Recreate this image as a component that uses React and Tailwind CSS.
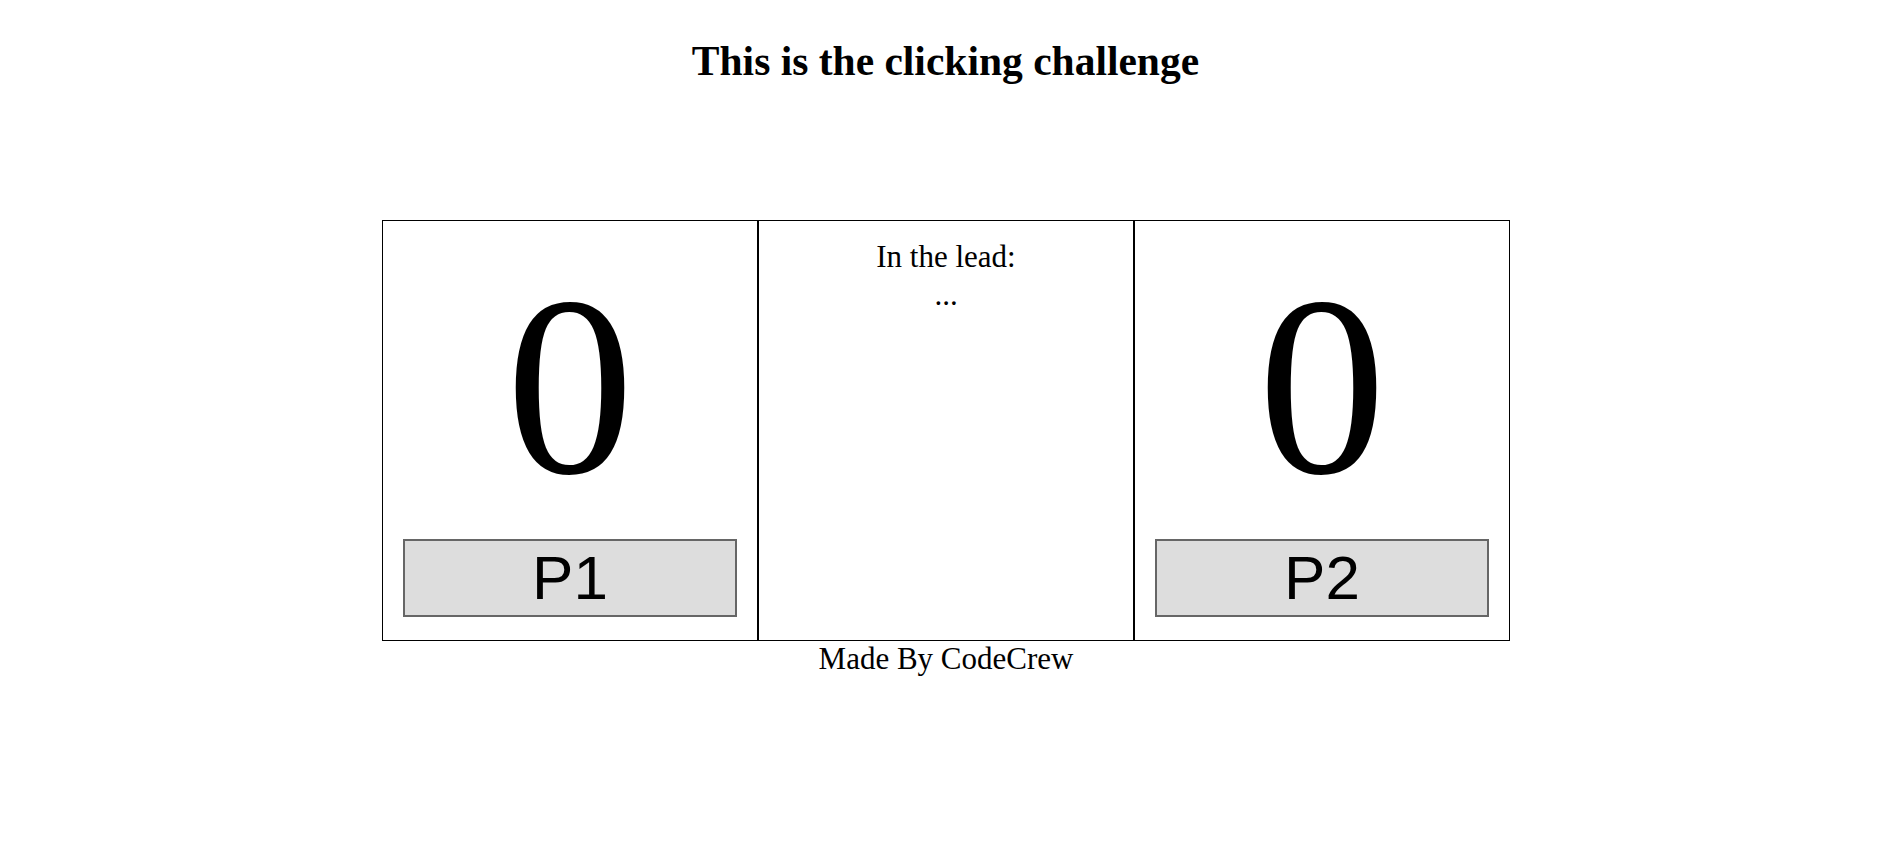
import React, { useState } from "react";

const ScoreCell = ({ score, label, onClick }) => (
  <div className="w-[376px] h-[421px] border border-black flex flex-col items-center pt-[36px]">
    <div className="h-[260px] text-[256px] leading-[260px]">{score}</div>
    <button
      onClick={onClick}
      className="mt-[22px] w-[334px] h-[78px] border-2 border-[#666666] bg-[#dddddd] text-[62px] leading-none text-black flex items-center justify-center font-['Liberation_Sans',Arial,sans-serif]"
    >
      {label}
    </button>
  </div>
);

const App = () => {
  const [p1, setP1] = useState(0);
  const [p2, setP2] = useState(0);

  const leader = p1 === p2 ? "..." : p1 > p2 ? "P1" : "P2";

  return (
    <div className="w-full min-h-[856px] bg-white text-black font-['Liberation_Serif','Times_New_Roman',serif] flex flex-col items-center">
      <h1 className="mt-[37px] -ml-[5px] text-[41.5px] font-bold leading-[48px]">
        This is the clicking challenge
      </h1>

      {/* Score board */}
      <div className="mt-[135px] w-[1132px] flex">
        <ScoreCell score={p1} label="P1" onClick={() => setP1(p1 + 1)} />
        <div className="w-[376px] h-[421px] border border-black flex flex-col items-center pt-[17px] text-[31px] leading-[38px]">
          <div>In the lead:</div>
          <div>{leader}</div>
        </div>
        <ScoreCell score={p2} label="P2" onClick={() => setP2(p2 + 1)} />
      </div>

      <div className="-ml-[4px] text-[31px] leading-[35px]">Made By CodeCrew</div>
    </div>
  );
};

export default App;
